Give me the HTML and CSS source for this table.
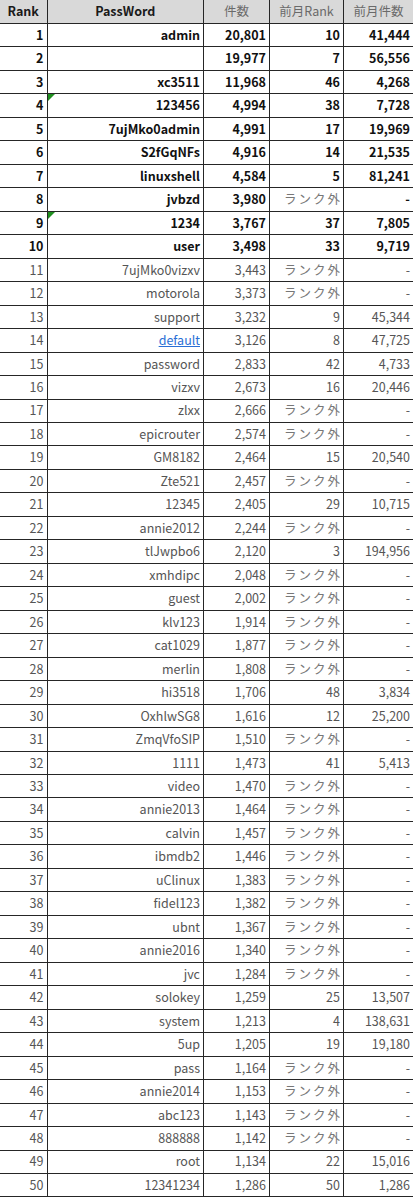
FILE: index.html
```html
<!DOCTYPE html>
<html lang="ja">
<head>
<meta charset="utf-8">
<title>PassWord Ranking</title>
<link rel="stylesheet" href="styles.css">
</head>
<body>
<div class="table">
  <div class="row head">
    <div class="c hb">Rank</div><div class="c hb">PassWord</div><div class="c hg">件数</div><div class="c hg">前月Rank</div><div class="c hg">前月件数</div>
  </div>
  <div class="row top"><div class="c">1</div><div class="c">admin</div><div class="c">20,801</div><div class="c">10</div><div class="c">41,444</div></div>
  <div class="row top"><div class="c">2</div><div class="c"></div><div class="c">19,977</div><div class="c">7</div><div class="c">56,556</div></div>
  <div class="row top"><div class="c">3</div><div class="c">xc3511</div><div class="c">11,968</div><div class="c">46</div><div class="c">4,268</div></div>
  <div class="row top"><div class="c">4</div><div class="c flag">123456</div><div class="c">4,994</div><div class="c">38</div><div class="c">7,728</div></div>
  <div class="row top"><div class="c">5</div><div class="c">7ujMko0admin</div><div class="c">4,991</div><div class="c">17</div><div class="c">19,969</div></div>
  <div class="row top"><div class="c">6</div><div class="c">S2fGqNFs</div><div class="c">4,916</div><div class="c">14</div><div class="c">21,535</div></div>
  <div class="row top"><div class="c">7</div><div class="c">linuxshell</div><div class="c">4,584</div><div class="c">5</div><div class="c">81,241</div></div>
  <div class="row top"><div class="c">8</div><div class="c">jvbzd</div><div class="c">3,980</div><div class="c out">ランク外</div><div class="c">-</div></div>
  <div class="row top"><div class="c">9</div><div class="c flag">1234</div><div class="c">3,767</div><div class="c">37</div><div class="c">7,805</div></div>
  <div class="row top"><div class="c">10</div><div class="c">user</div><div class="c">3,498</div><div class="c">33</div><div class="c">9,719</div></div>
  <div class="row"><div class="c">11</div><div class="c">7ujMko0vizxv</div><div class="c">3,443</div><div class="c out">ランク外</div><div class="c">-</div></div>
  <div class="row"><div class="c">12</div><div class="c">motorola</div><div class="c">3,373</div><div class="c out">ランク外</div><div class="c">-</div></div>
  <div class="row"><div class="c">13</div><div class="c">support</div><div class="c">3,232</div><div class="c">9</div><div class="c">45,344</div></div>
  <div class="row"><div class="c">14</div><div class="c"><a class="link" href="#">default</a></div><div class="c">3,126</div><div class="c">8</div><div class="c">47,725</div></div>
  <div class="row"><div class="c">15</div><div class="c">password</div><div class="c">2,833</div><div class="c">42</div><div class="c">4,733</div></div>
  <div class="row"><div class="c">16</div><div class="c">vizxv</div><div class="c">2,673</div><div class="c">16</div><div class="c">20,446</div></div>
  <div class="row"><div class="c">17</div><div class="c">zlxx</div><div class="c">2,666</div><div class="c out">ランク外</div><div class="c">-</div></div>
  <div class="row"><div class="c">18</div><div class="c">epicrouter</div><div class="c">2,574</div><div class="c out">ランク外</div><div class="c">-</div></div>
  <div class="row"><div class="c">19</div><div class="c">GM8182</div><div class="c">2,464</div><div class="c">15</div><div class="c">20,540</div></div>
  <div class="row"><div class="c">20</div><div class="c">Zte521</div><div class="c">2,457</div><div class="c out">ランク外</div><div class="c">-</div></div>
  <div class="row"><div class="c">21</div><div class="c">12345</div><div class="c">2,405</div><div class="c">29</div><div class="c">10,715</div></div>
  <div class="row"><div class="c">22</div><div class="c">annie2012</div><div class="c">2,244</div><div class="c out">ランク外</div><div class="c">-</div></div>
  <div class="row"><div class="c">23</div><div class="c">tlJwpbo6</div><div class="c">2,120</div><div class="c">3</div><div class="c">194,956</div></div>
  <div class="row"><div class="c">24</div><div class="c">xmhdipc</div><div class="c">2,048</div><div class="c out">ランク外</div><div class="c">-</div></div>
  <div class="row"><div class="c">25</div><div class="c">guest</div><div class="c">2,002</div><div class="c out">ランク外</div><div class="c">-</div></div>
  <div class="row"><div class="c">26</div><div class="c">klv123</div><div class="c">1,914</div><div class="c out">ランク外</div><div class="c">-</div></div>
  <div class="row"><div class="c">27</div><div class="c">cat1029</div><div class="c">1,877</div><div class="c out">ランク外</div><div class="c">-</div></div>
  <div class="row"><div class="c">28</div><div class="c">merlin</div><div class="c">1,808</div><div class="c out">ランク外</div><div class="c">-</div></div>
  <div class="row"><div class="c">29</div><div class="c">hi3518</div><div class="c">1,706</div><div class="c">48</div><div class="c">3,834</div></div>
  <div class="row"><div class="c">30</div><div class="c">OxhlwSG8</div><div class="c">1,616</div><div class="c">12</div><div class="c">25,200</div></div>
  <div class="row"><div class="c">31</div><div class="c">ZmqVfoSIP</div><div class="c">1,510</div><div class="c out">ランク外</div><div class="c">-</div></div>
  <div class="row"><div class="c">32</div><div class="c">1111</div><div class="c">1,473</div><div class="c">41</div><div class="c">5,413</div></div>
  <div class="row"><div class="c">33</div><div class="c">video</div><div class="c">1,470</div><div class="c out">ランク外</div><div class="c">-</div></div>
  <div class="row"><div class="c">34</div><div class="c">annie2013</div><div class="c">1,464</div><div class="c out">ランク外</div><div class="c">-</div></div>
  <div class="row"><div class="c">35</div><div class="c">calvin</div><div class="c">1,457</div><div class="c out">ランク外</div><div class="c">-</div></div>
  <div class="row"><div class="c">36</div><div class="c">ibmdb2</div><div class="c">1,446</div><div class="c out">ランク外</div><div class="c">-</div></div>
  <div class="row"><div class="c">37</div><div class="c">uClinux</div><div class="c">1,383</div><div class="c out">ランク外</div><div class="c">-</div></div>
  <div class="row"><div class="c">38</div><div class="c">fidel123</div><div class="c">1,382</div><div class="c out">ランク外</div><div class="c">-</div></div>
  <div class="row"><div class="c">39</div><div class="c">ubnt</div><div class="c">1,367</div><div class="c out">ランク外</div><div class="c">-</div></div>
  <div class="row"><div class="c">40</div><div class="c">annie2016</div><div class="c">1,340</div><div class="c out">ランク外</div><div class="c">-</div></div>
  <div class="row"><div class="c">41</div><div class="c">jvc</div><div class="c">1,284</div><div class="c out">ランク外</div><div class="c">-</div></div>
  <div class="row"><div class="c">42</div><div class="c">solokey</div><div class="c">1,259</div><div class="c">25</div><div class="c">13,507</div></div>
  <div class="row"><div class="c">43</div><div class="c">system</div><div class="c">1,213</div><div class="c">4</div><div class="c">138,631</div></div>
  <div class="row"><div class="c">44</div><div class="c">5up</div><div class="c">1,205</div><div class="c">19</div><div class="c">19,180</div></div>
  <div class="row"><div class="c">45</div><div class="c">pass</div><div class="c">1,164</div><div class="c out">ランク外</div><div class="c">-</div></div>
  <div class="row"><div class="c">46</div><div class="c">annie2014</div><div class="c">1,153</div><div class="c out">ランク外</div><div class="c">-</div></div>
  <div class="row"><div class="c">47</div><div class="c">abc123</div><div class="c">1,143</div><div class="c out">ランク外</div><div class="c">-</div></div>
  <div class="row"><div class="c">48</div><div class="c">888888</div><div class="c">1,142</div><div class="c out">ランク外</div><div class="c">-</div></div>
  <div class="row"><div class="c">49</div><div class="c">root</div><div class="c">1,134</div><div class="c">22</div><div class="c">15,016</div></div>
  <div class="row"><div class="c">50</div><div class="c">12341234</div><div class="c">1,286</div><div class="c">50</div><div class="c">1,286</div></div>
</div>
</body>
</html>
```
FILE: styles.css
```css
html, body {
  margin: 0;
  padding: 0;
  background: #ffffff;
}
body {
  font-family: "Noto Sans CJK JP", "Noto Sans", sans-serif;
  font-size: 12.5px;
  color: #555555;
}
.table {
  width: 413px;
}
.row {
  display: grid;
  grid-template-columns: 47.5px 156.5px 66px 74px 69px;
  height: 23.48px;
  box-sizing: border-box;
  border-bottom: 1.5px solid #262626;
}
.row.head {
  height: 24px;
  background: #d9d9d9;
}
.c {
  box-sizing: border-box;
  border-right: 1.5px solid #262626;
  padding: 0 3px 0 2px;
  display: flex;
  align-items: center;
  justify-content: flex-end;
  white-space: nowrap;
  overflow: hidden;
  line-height: 1;
  position: relative;
}
.c:last-child {
  border-right: none;
}
.head .c {
  justify-content: center;
  padding: 0;
}
.hb {
  font-weight: 700;
  color: #1a1a1a;
}
.hg {
  color: #6a6a6a;
  font-weight: 400;
}
.top .c {
  font-weight: 700;
  color: #111111;
}
.c.out, .top .c.out {
  color: #777777;
  font-weight: 400;
  letter-spacing: 2px;
  padding-right: 1px;
}
.link {
  color: #2a6fd6;
  text-decoration: underline;
}
.flag::before {
  content: "";
  position: absolute;
  left: 0;
  top: 0;
  width: 0;
  height: 0;
  border-top: 7px solid #1f8f1f;
  border-right: 7px solid transparent;
}
```
